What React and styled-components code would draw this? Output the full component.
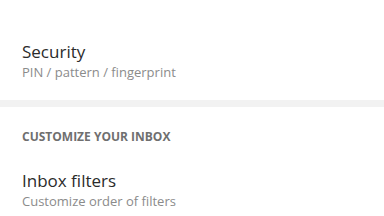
import React from "react";
import styled, { createGlobalStyle } from "styled-components";

const Global = createGlobalStyle`
  html, body { margin: 0; padding: 0; background: #fff; }
  body { font-family: "Open Sans", "Liberation Sans", sans-serif; width: 384px; height: 216px; overflow: hidden; }
`;

const Page = styled.div`
  display: flex;
  flex-direction: column;
  width: 384px;
  height: 216px;
  overflow: hidden;
`;

const Section = styled.div`
  display: flex;
  flex-direction: column;
  padding: 0 22px;
`;

const Item = styled.div`
  display: flex;
  flex-direction: column;
  padding: ${(p) => p.$pad};
`;

const Title = styled.div`
  font-size: 17px;
  line-height: 22px;
  color: #2b2b2b;
`;

const Sub = styled.div`
  font-size: 13px;
  line-height: 18px;
  color: #8b8b8b;
`;

const Divider = styled.div`
  height: 7px;
  background: #f2f2f2;
`;

const Header = styled.div`
  font-size: 12px;
  font-weight: 700;
  color: #6f6f6f;
  line-height: 16px;
  margin-top: ${(p) => p.$mt};
`;

export default function App() {
  return (
    <Page>
      <Global />
      <Section>
        <Item $pad="41px 0 19px">
          <Title>Security</Title>
          <Sub>PIN / pattern / fingerprint</Sub>
        </Item>
      </Section>
      <Divider />
      <Section>
        <Header $mt="22px">CUSTOMIZE YOUR INBOX</Header>
        <Item $pad="25px 0 0">
          <Title>Inbox filters</Title>
          <Sub>Customize order of filters</Sub>
        </Item>
      </Section>
    </Page>
  );
}
